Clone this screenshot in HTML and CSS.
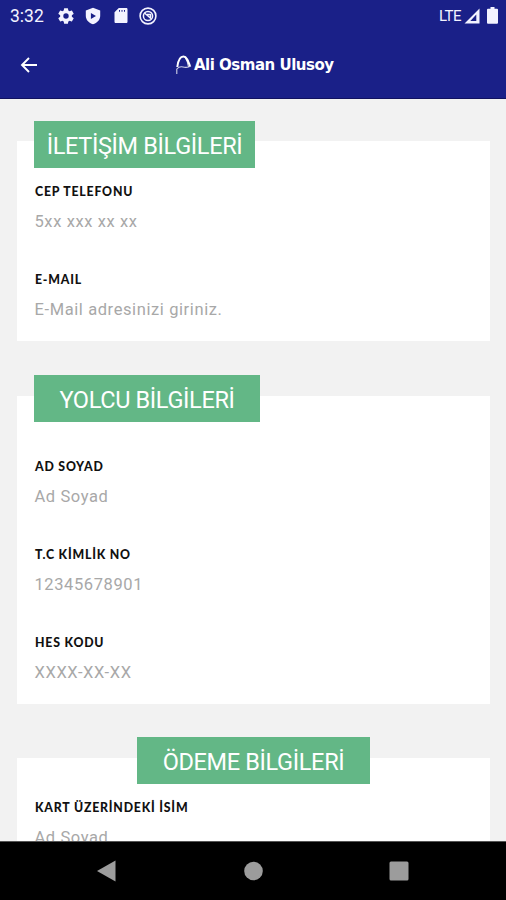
FILE: index.html
```html
<!DOCTYPE html>
<html lang="tr">
<head>
<meta charset="utf-8">
<title>Ali Osman Ulusoy</title>
<link rel="stylesheet" href="styles.css">
</head>
<body>
<div class="screen">
  <header class="header">
    <div class="status">
      <span class="clock">3:32</span>
      <svg class="gear" width="18" height="18" viewBox="1 1 22 22"><path fill="currentColor" fill-rule="evenodd" d="M19.14 12.94a7.5 7.5 0 0 0 0-1.88l2.03-1.58a.5.5 0 0 0 .12-.61l-1.92-3.32a.49.49 0 0 0-.59-.22l-2.39.96a7 7 0 0 0-1.62-.94l-.36-2.54a.48.48 0 0 0-.48-.41h-3.84a.47.47 0 0 0-.47.41l-.36 2.54c-.59.24-1.13.57-1.62.94l-2.39-.96a.48.48 0 0 0-.59.22L2.74 8.87a.47.47 0 0 0 .12.61l2.03 1.58a7.5 7.5 0 0 0 0 1.88l-2.03 1.58a.5.5 0 0 0-.12.61l1.92 3.32c.12.22.37.29.59.22l2.39-.96c.5.38 1.03.7 1.62.94l.36 2.54c.05.24.24.41.48.41h3.84c.24 0 .44-.17.47-.41l.36-2.54a7 7 0 0 0 1.62-.94l2.39.96c.22.08.47 0 .59-.22l1.92-3.32a.47.47 0 0 0-.12-.61zM12 15.300a3.300 3.300 0 1 1 0-6.600 3.300 3.300 0 0 1 0 6.600z"/></svg>
      <svg class="shield" width="18" height="18" viewBox="0 0 18 18"><path fill="currentColor" fill-rule="evenodd" d="M9 .7 16.2 3.500v5.200c0 4-3 7.300-7.200 8.600-4.200-1.300-7.200-4.600-7.200-8.600V3.500zM6.900 6v6L12 9z"/></svg>
      <svg class="card-icon" width="14" height="17" viewBox="0 0 14 17"><path fill="currentColor" fill-rule="evenodd" d="M4.800 1h7.400c.8 0 1.300.5 1.300 1.300v12.400c0 .8-.5 1.300-1.300 1.300H1.800C1 16 .5 15.500.5 14.700V5.300zM5 3v1.800h1V3zm2.500 0v1.800h1V3zM10 3v1.800h1V3z"/></svg>
      <svg class="ring-icon" width="18" height="18" viewBox="0 0 18 18" fill="none" stroke="currentColor"><circle cx="9" cy="9" r="7.900" stroke-width="1.600"/><circle cx="9" cy="9" r="4.600" stroke-width="1.500"/><path d="m5.500 6 7 6M8 7.500h3.500v3" stroke-width="1.500"/></svg>
      <span class="lte">LTE</span>
      <svg class="signal" width="16" height="16" viewBox="0 0 16 16"><path fill="currentColor" fill-rule="evenodd" d="M15.500.5v15H.5zM12.300 6.500 6.300 13H12.300z"/></svg>
      <svg class="battery" width="11" height="17" viewBox="0 0 11 17"><path fill="currentColor" d="M3.500 0h4v1.700H10q1 0 1 1v13q0 1-1 1H1q-1 0-1-1v-13q0-1 1-1h2.500z"/></svg>
    </div>
    <div class="appbar">
      <svg class="back" width="18" height="18" viewBox="0 0 18 18" fill="none" stroke="currentColor" stroke-width="1.900"><path d="M17 9H2.500M9 2 2 9l7 7"/></svg>
      <div class="brand">
        <svg width="17" height="20" viewBox="0 0 17 20" fill="none" stroke="currentColor"><path stroke-width="2" d="M2.300 12C3 6 5 1.500 8.500 1.500c3 0 4.500 4 6.500 9.500"/><path stroke-width="1.100" opacity=".8" d="M1.800 19v-5Q4.500 11 8 12q4 1.200 8-1M10 2q3 5 3.500 10"/></svg>
        <span class="brand-name">Ali Osman Ulusoy</span>
      </div>
    </div>
  </header>
  <main class="content">
    <section class="card contact">
      <h2 class="title">İLETİŞİM BİLGİLERİ</h2>
      <div class="field"><span class="label">CEP TELEFONU</span><span class="value">5xx xxx xx xx</span></div>
      <div class="field"><span class="label">E-MAIL</span><span class="value">E-Mail adresinizi giriniz.</span></div>
    </section>
    <section class="card passenger">
      <h2 class="title">YOLCU BİLGİLERİ</h2>
      <div class="field"><span class="label">AD SOYAD</span><span class="value">Ad Soyad</span></div>
      <div class="field"><span class="label">T.C KİMLİK NO</span><span class="value">12345678901</span></div>
      <div class="field"><span class="label">HES KODU</span><span class="value">XXXX-XX-XX</span></div>
    </section>
    <section class="card payment">
      <h2 class="title">ÖDEME BİLGİLERİ</h2>
      <div class="field"><span class="label">KART ÜZERİNDEKİ İSİM</span><span class="value">Ad Soyad</span></div>
    </section>
  </main>
  <nav class="navbar">
    <svg width="20" height="22" viewBox="0 0 20 22"><path fill="currentColor" d="M0 11 18.500.5v21z"/></svg>
    <svg width="20" height="20" viewBox="0 0 20 20"><circle cx="10.500" cy="10" r="9.300" fill="currentColor"/></svg>
    <svg width="20" height="20" viewBox="0 0 20 20"><rect x=".5" y=".5" width="19" height="19" rx="1.500" fill="currentColor"/></svg>
  </nav>
</div>
</body>
</html>
```
FILE: styles.css
```css
* { box-sizing: border-box; }
body { margin: 0; font-family: Roboto, sans-serif; background: #f2f2f2; }
svg { display: block; flex: none; }
.screen { height: 900px; display: flex; flex-direction: column; overflow: hidden; }
.header { height: 99px; flex: none; background: #1a2088; color: #fff; border-bottom: 1px solid #11125f; }
.status { height: 31px; display: flex; align-items: center; padding: 0 9px 0 10px; color: #f3f3ff; }
.clock { width: 47px; font-size: 17.500px; line-height: 30px; padding-top: 1px; }
.shield { margin-left: 9px; }
.card-icon { margin-left: 12px; }
.ring-icon { margin-left: 11px; }
.lte { margin-left: auto; font-size: 15px; letter-spacing: -.5px; }
.signal { margin-left: 3px; }
.battery { margin-left: 7px; margin-right: -1px; }
.appbar { height: 67px; display: grid; grid-template-columns: 155px 1fr; align-items: center; padding-left: 20px; }
.brand { display: flex; align-items: center; gap: 2px; }
.brand-name { font: 700 15px/20px "DejaVu Sans", sans-serif; letter-spacing: -.5px; white-space: nowrap; padding-top: 1px; }
.content { flex: 1; min-height: 0; overflow: hidden; padding: 42px 16px 0 17px; }
.card { display: flex; flex-direction: column; align-items: flex-start; background: #fff; padding: 0 17px; }
.contact { height: 200px; }
.passenger { height: 308px; margin-top: 55px; }
.payment { height: 200px; margin-top: 54px; }
.title { margin: -20px 0 14px; width: 221px; height: 47px; flex: none; background: #63b786; color: #fff; font-size: 23.500px; line-height: 50px; letter-spacing: -.35px; font-weight: 400; text-align: center; white-space: nowrap; }
.passenger .title { width: 226px; margin: -21px 0 35px; }
.payment .title { width: 233px; margin: -21px 0 14px; align-self: center; }
.field { height: 88px; flex: none; display: flex; flex-direction: column; padding-left: 0; }
.label { font: 900 12.300px/20px Lato, sans-serif; letter-spacing: .8px; color: #111; white-space: nowrap; padding-left: 1px; }
.value { margin-top: 10px; font-size: 16.500px; line-height: 20px; letter-spacing: .6px; color: #a8a8a8; white-space: nowrap; padding-left: .5px; }
.navbar { height: 59px; flex: none; background: #000; color: #9c9c9c; border-top: 1px solid #555; display: flex; justify-content: space-between; align-items: center; padding: 0 97px; }
```
